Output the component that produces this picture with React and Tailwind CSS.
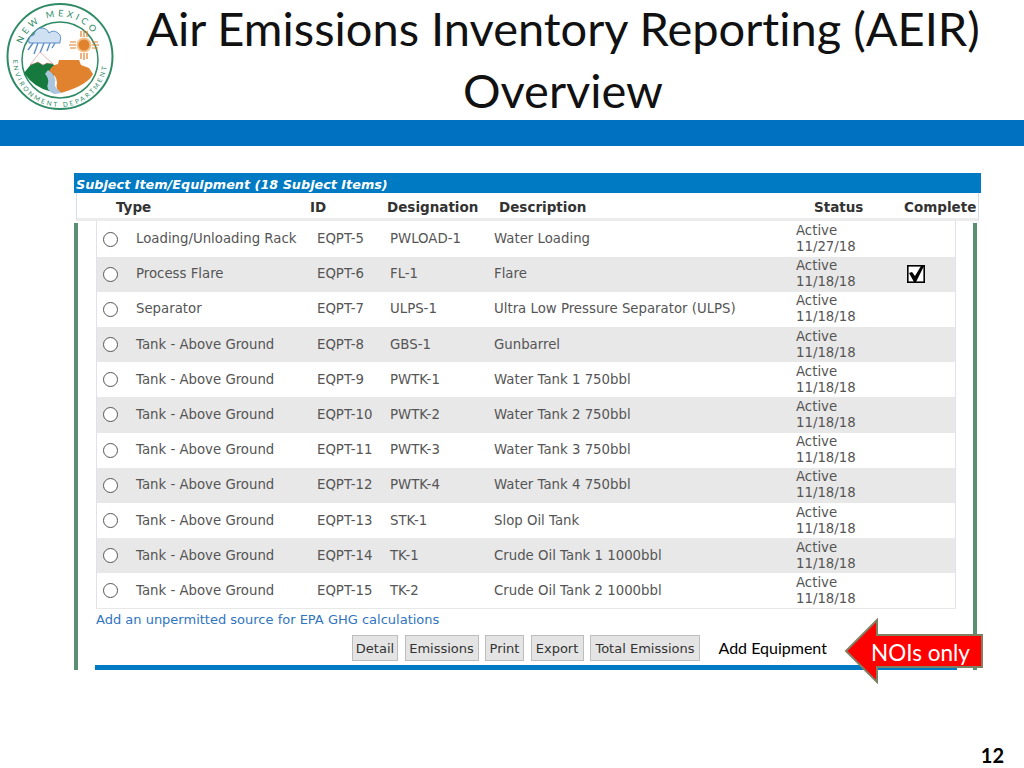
import React from "react";

const rows = [
  ["Loading/Unloading Rack", "EQPT-5", "PWLOAD-1", "Water Loading", "11/27/18", false],
  ["Process Flare", "EQPT-6", "FL-1", "Flare", "11/18/18", true],
  ["Separator", "EQPT-7", "ULPS-1", "Ultra Low Pressure Separator (ULPS)", "11/18/18", false],
  ["Tank - Above Ground", "EQPT-8", "GBS-1", "Gunbarrel", "11/18/18", false],
  ["Tank - Above Ground", "EQPT-9", "PWTK-1", "Water Tank 1 750bbl", "11/18/18", false],
  ["Tank - Above Ground", "EQPT-10", "PWTK-2", "Water Tank 2 750bbl", "11/18/18", false],
  ["Tank - Above Ground", "EQPT-11", "PWTK-3", "Water Tank 3 750bbl", "11/18/18", false],
  ["Tank - Above Ground", "EQPT-12", "PWTK-4", "Water Tank 4 750bbl", "11/18/18", false],
  ["Tank - Above Ground", "EQPT-13", "STK-1", "Slop Oil Tank", "11/18/18", false],
  ["Tank - Above Ground", "EQPT-14", "TK-1", "Crude Oil Tank 1 1000bbl", "11/18/18", false],
  ["Tank - Above Ground", "EQPT-15", "TK-2", "Crude Oil Tank 2 1000bbl", "11/18/18", false],
];

const buttons = [
  ["Detail", "w-[46px]"],
  ["Emissions", "w-[74px]"],
  ["Print", "w-[39px]"],
  ["Export", "w-[53px]"],
  ["Total Emissions", "w-[110px]"],
];

function Logo() {
  return (
    <svg width="120" height="112" viewBox="0 0 120 112" className="block">
      <defs>
        <path id="topArc" d="M 22 44 A 40 40 0 0 1 100 56.5" />
        <path id="botArc" d="M 13 60 A 47 47 0 0 0 107 60" />
      </defs>
      <circle cx="60" cy="56.5" r="52.5" fill="#fff" stroke="#2e8b66" strokeWidth="2" />
      <circle cx="60" cy="60" r="38" fill="#fff" stroke="#2e8b66" strokeWidth="1.5" />
      <text fontSize="9" fill="#2e8b66" fontFamily="Lato, sans-serif" letterSpacing="3.2">
        <textPath href="#topArc">NEW MEXICO</textPath>
      </text>
      <text fontSize="6.5" fill="#2e8b66" fontFamily="Lato, sans-serif" letterSpacing="2.3">
        <textPath href="#botArc">ENVIRONMENT DEPARTMENT</textPath>
      </text>
      {/* awan dan hujan */}
      <path d="M29 43a6 6 0 0 1 5-8 8 8 0 0 1 8-7 8 8 0 0 1 7 5 7 7 0 0 1 11 8 3 3 0 0 1 0 2z" fill="#cfe0f2" stroke="#5b8fc9" />
      <path d="M33 43l-5 7M38 43l-4 11M44 43l-4 10M50 43l-3 8M55 43l-3 5" stroke="#5b8fc9" strokeWidth="1.4" />
      {/* gunung */}
      <path d="M24 73l16-20 15 13-3 26q-18-4-28-19z" fill="#167a3e" />
      <path d="M30 65l10-13 13 12-6-1-4 2-5-3z" fill="#fff" stroke="#c77" strokeWidth="0.5" />
      {/* mesa */}
      <path d="M49 72q2-7 9-8l1-4h20l2 5 8 3 4 6q-5 11-32 19-6-4-4-10 0-8-8-11z" fill="#e0822e" />
      {/* sungai */}
      <path d="M48 70q9 6 7 13-1 5 7 10l-8 1q-9-4-6-11 1-5-3-9z" fill="#a9c6de" />
      {/* zia */}
      <circle cx="84" cy="45" r="6.5" fill="#e0822e" stroke="#f3c18b" strokeWidth="2" />
      <path d="M84 30v7M81 31v6M87 31v6M84 53v7M81 53v6M87 53v6M69 45h7M70 42h6M70 48h6M92 45h7M92 42h6M92 48h6" stroke="#e0822e" strokeWidth="1.2" />
    </svg>
  );
}

function Radio() {
  return <span className="block w-[15px] h-[15px] rounded-full border border-[#555] bg-white" />;
}

function Check() {
  return (
    <svg width="18" height="18" viewBox="0 0 18 18" className="block">
      <rect x="0.8" y="0.8" width="16.4" height="16.4" fill="#fff" stroke="#000" strokeWidth="1.6" />
      <path d="M2 8l3-1 3 4 6-10h3L9 17H7z" fill="#000" />
    </svg>
  );
}

export default function App() {
  return (
    <div className="relative w-[1024px] h-[768px] overflow-hidden bg-white flex flex-col font-['Lato',sans-serif]">
      {/* Kepala slide */}
      <div className="h-[120px] flex">
        <div className="w-[146px]">
          <Logo />
        </div>
        <h1 className="w-[834px] -mt-[3px] text-center text-[47px] leading-[62px] font-normal text-[#111] whitespace-nowrap [font-variant-ligatures:none]">
          Air Emissions Inventory Reporting (AEIR)
          <br />
          Overview
        </h1>
      </div>
      <div className="h-[26px] bg-[#0070c0]" />

      {/* Tangkapan layar tabel */}
      <div className="mt-[27px] ml-[74px] w-[907px] font-['DejaVu_Sans',sans-serif]">
        <div className="h-[20px] bg-[#007ac2] pl-[2px] pt-[1px] text-[12.8px] leading-[21px] font-bold italic text-white">
          Subject Item/Equipment (18 Subject Items)
        </div>
        <div className="ml-[2px] w-[903px] h-[28px] mb-[2px] pt-[3px] border-x border-[#d5dcec] border-b-[3px] border-b-[#ececec] grid grid-cols-[233px_77px_112px_315px_90px_75px] items-center text-[13.5px] font-bold text-[#333]">
          <span className="pl-[39px]">Type</span>
          <span>ID</span>
          <span>Designation</span>
          <span>Description</span>
          <span>Status</span>
          <span>Complete</span>
        </div>
        <div className="w-[903px] h-[447px] flex flex-col pl-[18px] border-x-[4px] border-[#5a8f74] text-[13.3px] text-[#555]">
          <div className="w-[860px] border-x border-[#dfe2ee] border-b border-b-[#e8e8e8] -mt-[1.6px]">
            {rows.map((r, i) => (
              <div
                key={r[1]}
                className={`h-[35.2px] grid grid-cols-[39px_181px_73px_104px_302px_111px_48px] items-center ${
                  i % 2 === 1 ? "bg-[#e8e8e8]" : "bg-white"
                }`}
              >
                <span className="pl-[6px]">
                  <Radio />
                </span>
                <span className="whitespace-nowrap">{r[0]}</span>
                <span>{r[1]}</span>
                <span>{r[2]}</span>
                <span className="whitespace-nowrap">{r[3]}</span>
                <span className="leading-[16px]">
                  Active
                  <br />
                  {r[4]}
                </span>
                <span className="flex">{r[5] && <Check />}</span>
              </div>
            ))}
          </div>
          <div className="mt-[3px] h-[16px] leading-[16px] text-[13px] text-[#2f75c0]">
            Add an unpermitted source for EPA GHG calculations
          </div>
          <div className="mt-[7px] h-[27px] flex pl-[256px] gap-[6.5px]">
            {buttons.map(([label, w]) => (
              <span
                key={label}
                className={`${w} flex items-center justify-center bg-[#e4e4e4] border border-[#bdbdbd] text-[#333] text-[13px] whitespace-nowrap`}
              >
                {label}
              </span>
            ))}
            <span className="ml-[12px] self-center text-[16px] text-black font-['Lato',sans-serif] whitespace-nowrap">
              Add Equipment
            </span>
          </div>
          <div className="mt-[4px] w-[862px] h-[5px] -ml-[1px] bg-[#007ac2]" />
        </div>
      </div>

      {/* Panah NOIs only */}
      <div className="absolute left-[844px] top-[618px] w-[140px] h-[66px]">
        <svg width="140" height="66" viewBox="0 0 140 66" className="block">
          <path d="M2 33L33 2V17H138V49H33V64Z" fill="#ff0000" stroke="#7f7f63" strokeWidth="2" />
        </svg>
        <span className="absolute left-[27px] top-[21px] text-[22.5px] leading-[28px] text-white whitespace-nowrap">
          NOIs only
        </span>
      </div>

      <div className="mt-auto pr-[20px] text-right text-[20px] leading-[26px] font-bold text-black">
        12
      </div>
    </div>
  );
}
